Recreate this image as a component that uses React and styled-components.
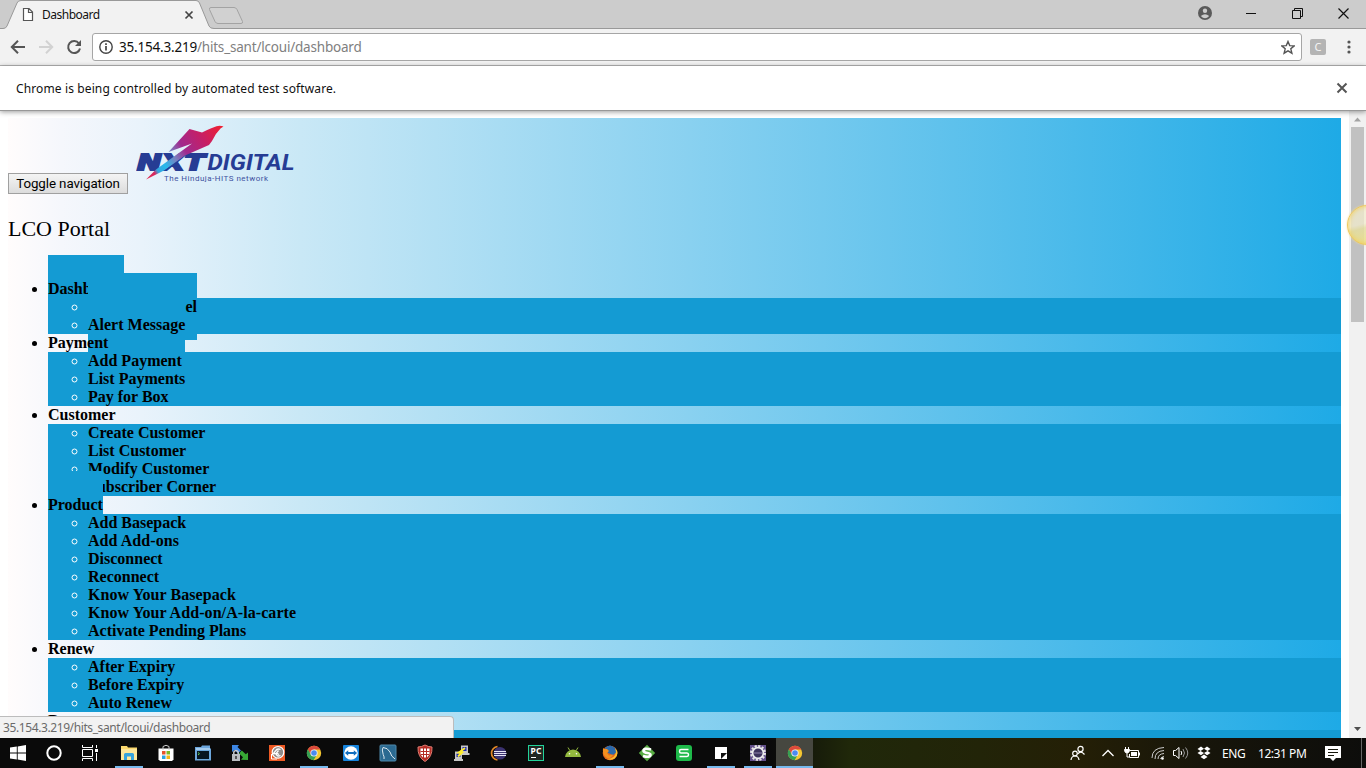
import React from "react";
import styled, { createGlobalStyle, css } from "styled-components";

const Global = createGlobalStyle`
  * { box-sizing: border-box; }
  html, body { margin: 0; padding: 0; overflow: hidden; background: #fff; }
`;

const ui = css`font-family: "Noto Sans", "Open Sans", sans-serif;`;

const Screen = styled.div`
  width: 1366px; height: 768px; display: flex; flex-direction: column; overflow: hidden; position: relative;
`;

/* ---------- browser chrome ---------- */
const TabStrip = styled.div`
  height: 29px; flex: none; background: #ccc; border-bottom: 1px solid #999;
  display: flex; align-items: flex-start; justify-content: space-between; position: relative;
`;
const Tabs = styled.div`display: flex; height: 29px;`;
const Tab = styled.div`
  width: 214px; height: 29px; position: relative; flex: none;
`;
const TabShape = styled.svg`position: absolute; left: 0; top: 0;`;
const TabContent = styled.div`
  position: relative; height: 29px; display: flex; align-items: center; padding-left: 22px;
`;
const TabTitle = styled.span`
  ${ui} font-size: 12px; letter-spacing: -0.5px; color: #111; width: 142px; margin-left: 8px; line-height: 29px;
`;
const NewTab = styled.svg`margin: 6px 0 0 -6px;`;
const WindowButtons = styled.div`display: flex; align-items: center; height: 26px;`;
const WindowButton = styled.div`width: 46px; height: 26px; display: grid; place-items: center;`;

const Toolbar = styled.div`
  height: 37px; flex: none; background: #f2f2f2; border-bottom: 1px solid #b6b6b6;
  display: flex; align-items: center; padding: 0 9px 0 10px;
`;
const NavIcon = styled.svg`margin-right: 12px; flex: none;`;
const AddressBar = styled.div`
  width: 1210px; height: 28px; margin-left: -2px; background: #fff; border: 1px solid #a6a6a6; border-radius: 3px;
  display: flex; align-items: center; padding: 0 6px 0 6px; ${ui} font-size: 13.5px;
`;
const Address = styled.span`flex: 1; margin-left: 6px; color: #808080; letter-spacing: -0.2px; white-space: nowrap;`;
const Host = styled.span`color: #111;`;
const Extension = styled.div`
  width: 16px; height: 16px; margin: 0 0 0 8px; background: #b4b4b4; border-radius: 2px; color: #f4f4f4;
  ${ui} font-size: 11px; line-height: 16px; text-align: center;
`;
const Dots = styled.svg`margin-left: 20px;`;

const InfoBar = styled.div`
  height: 45px; flex: none; background: #fff; border-bottom: 1px solid #989898; box-shadow: 0 1px 5px rgba(0,0,0,.4);
  display: flex; justify-content: space-between; align-items: center; padding: 0 18px 0 16px; position: relative; z-index: 5;
`;
const InfoText = styled.span`${ui} font-size: 12px; letter-spacing: 0.12px; color: #111;`;

/* ---------- page ---------- */
const Viewport = styled.div`height: 627px; flex: none; display: flex; overflow: hidden; position: relative; background: #fff;`;
const Page = styled.div`flex: 1; padding: 7px 8px 0; height: 627px; overflow: hidden;`;
const Body = styled.div`
  height: 900px; font-family: "Liberation Serif", "Times New Roman", serif; font-size: 16px; color: #000;
  background: linear-gradient(to right, #fffcfc 0%, #f5f7fc 4%, #e9f3fb 10%, #c9e8f6 22%, #1eaae6 100%);
`;
const Brand = styled.div`display: flex; align-items: flex-end; height: 76px;`;
const Toggle = styled.button`
  width: 120px; height: 21px; padding: 0; border: 1px solid #a0a0a0; border-radius: 0; color: #000;
  background: linear-gradient(#f4f4f4, #dcdcdc); font: 13.33px/17px Roboto, sans-serif; letter-spacing: -0.08px;
`;
const Logo = styled.svg`margin: 0 0 8px 8px;`;
const Heading = styled.div`font-size: 22px; line-height: 26px; padding-top: 22px; height: 86px;`;
const Menu = styled.ul`margin: 0; padding: 0 0 0 40px; list-style: disc; font-weight: bold; line-height: 18px;`;
const MenuItem = styled.li`height: auto;`;
const Label = styled.a`
  position: relative; color: #000; letter-spacing: ${(p) => (p.$long ? "0.07px" : "0")};
  ${(p) => p.$padded && css`padding: 25px 0; background: #149bd3;`}
`;
const SubMenu = styled.ul`
  position: relative; margin: 0; padding: 0 0 0 40px; list-style: circle; background: #149bd3; color: #fff;
`;
const ClippedLabel = styled(Label)`padding-left: 97.4px;`;

const ScrollBar = styled.div`
  width: 17px; height: 627px; background: #f1f1f1; display: flex; flex-direction: column; align-items: center;
`;
const Thumb = styled.div`width: 13px; height: 195px; background: #c1c1c1;`;
const ScrollSpace = styled.div`flex: 1;`;
const Bubble = styled.div`
  position: absolute; right: -21px; top: 94px; width: 40px; height: 40px; border-radius: 50%;
  border: 1px solid #f0c95c;
  background: linear-gradient(165deg, rgba(242,236,205,.75) 0 45%, rgba(229,222,160,.85) 55%, rgba(240,226,130,.9));
  box-shadow: inset 0 0 5px #f3cf55, 0 0 2px #f7dd8c;
`;
const Status = styled.div`
  position: absolute; left: 0; bottom: 30px; width: 454px; height: 22px; background: #f2f2f2; border: 1px solid #bcbcbc;
  border-left: 0; border-bottom: 0; border-radius: 0 4px 0 0; padding-left: 3px; ${ui} font-size: 12px; line-height: 22px;
  letter-spacing: -0.4px; color: #6a6a6a; z-index: 6;
`;

/* ---------- taskbar ---------- */
const TaskBar = styled.div`
  height: 30px; flex: none; display: flex; justify-content: space-between; color: #fff;
  background: linear-gradient(to right, #0a0a0a 0 770px, #171c0a 815px, #20280a 850px, #222408 980px, #241f06 1080px, #17150a 1200px, #0d0d0b);
`;
const Apps = styled.div`display: flex;`;
const SystemApps = styled.div`display: flex; margin-right: 2px;`;
const TaskButton = styled.div`
  width: ${(p) => (p.$system ? 36 : 37)}px; height: 30px; display: grid; place-items: center; position: relative;
  background: ${(p) => (p.$active ? "#464740" : "transparent")};
  &::after {
    content: ""; position: absolute; bottom: 0; height: 2px; background: #76b9ed;
    width: ${(p) => (p.$active ? "100%" : p.$open ? "28px" : 0)};
  }
`;
const Tray = styled.div`display: flex; align-items: center; width: 296px; ${ui} font-size: 12px;`;
const TrayIcon = styled.svg`flex: none; margin-right: ${(p) => p.$gap}px;`;
const TrayText = styled.span`
  letter-spacing: -0.45px; white-space: nowrap; width: ${(p) => p.$w}px; flex: none;
`;
const ShowDesktop = styled.div`width: 1px; height: 30px; margin-left: 20px; background: #666;`;

const Ic = ({ children }) => <svg width="18" height="18" viewBox="0 0 18 18">{children}</svg>;

const Chrome = () => (
  <Ic>
    <circle cx="9" cy="9" r="7.2" fill="#f4c631" />
    <path d="M2.8 5.4A7.2 7.2 0 0 1 15.4 5.6H9L5.8 10.4Z" fill="#dc4a3c" />
    <path d="M2.8 5.3A7.2 7.2 0 0 0 8.6 16.2L11.7 11 6 10.8Z" fill="#35a055" />
    <circle cx="9" cy="9" r="3.6" fill="#f4f4f4" /><circle cx="9" cy="9" r="2.8" fill="#4a8af0" />
  </Ic>
);

const systemIcons = [
  <Ic key="w"><path d="M1 3.5 7.8 2.5V8.5H1ZM8.7 2.4 17 1V8.5H8.7ZM1 9.4H7.8V15.5L1 14.5ZM8.7 9.4H17V17L8.7 15.6Z" fill="#fff" /></Ic>,
  <Ic key="c"><circle cx="9" cy="9" r="6.7" fill="none" stroke="#fff" strokeWidth="2" /></Ic>,
  <Ic key="t"><path d="M1.5 1V3.5H11.5V1M1.5 17V14.5H11.5V17M1.5 5.5H11.5V12.5H1.5ZM15.5 1V4M15.5 9V17" fill="none" stroke="#fff" /><path d="M14 5h3v3h-3z" fill="#fff" /></Ic>,
];

const apps = [
  { open: true, icon: <Ic><path d="M1 2H7L8 3.5H17V15H1Z" fill="#fbd96e" /><path d="M1 5H17V16H1Z" fill="#fde69a" /><path d="M4 16V10.5Q4 9 5.5 9H12.5Q14 9 14 10.5V16H11V12.5H7V16Z" fill="#36a3dc" /></Ic> },
  { icon: <Ic><path d="M1.5 4.5H16.5V15.5L15 17H3L1.5 15.5Z" fill="#fff" /><path d="M6 6V2.5Q9 0 12 2.5V6" fill="none" stroke="#ccc" /><path d="M5 7h3.5v3.5H5z" fill="#e8532b" /><path d="M9.5 7H13v3.5H9.5z" fill="#7db928" /><path d="M5 11.5h3.5V15H5z" fill="#2aa2e4" /><path d="M9.5 11.5H13V15H9.5z" fill="#f5b719" /></Ic> },
  { icon: <Ic><path d="M1 3H7L8 1.5H16V4L17 5V16.5H1Z" fill="#6ca6dc" /><path d="M2 4H16V6H2Z" fill="#a5cbed" /><rect x="3" y="7" width="12" height="8" fill="#081421" /><path d="M4 8.5 5.5 9.7 4 11" stroke="#5fcf55" fill="none" /></Ic> },
  { icon: <Ic><path d="M1 1H8L6.5 3 10 6.5 7 9.5 3.5 6 1 8Z" fill="#3c86e4" /><path d="M17 16V8.5L14.8 10.3 10.8 6.5 8 9.5 12 13.3 10 15.8Z" fill="#37a936" /><rect x="1" y="10" width="8" height="7" fill="#b9bdc2" /><path d="M2.8 10V8Q5 5 7.2 8V10" fill="none" stroke="#c6c9cd" strokeWidth="1.5" /><path d="M5 12V15" stroke="#333" strokeWidth="1.5" /></Ic> },
  { icon: <Ic><rect x="1" y="1" width="16" height="16" fill="#ee5a24" /><circle cx="10" cy="8.300" r="5.800" fill="#8f8b89" stroke="#fff" strokeWidth="1.200" /><path d="M12.500 5.500Q9 4 7.500 7L5.500 9.500 8 9.800Q9 13 12.500 11.500M10.500 6.500 8.500 9 11 10.500" fill="none" stroke="#fff" strokeWidth="1.300" /><path d="M3.500 10V15H9" fill="none" stroke="#fff" /></Ic> },
  { open: true, icon: <Chrome /> },
  { icon: <Ic><rect x="1" y="1" width="16" height="16" rx="1" fill="#1684dd" /><circle cx="9" cy="9" r="6.8" fill="#fff" /><path d="M2.9 9 6.2 6.3V8H11.8V6.3L15.1 9 11.8 11.700V10H6.2V11.700Z" fill="#126fc0" /></Ic> },
  { icon: <Ic><rect x="1" y="1" width="16" height="16" rx="1" fill="#2b6a91" stroke="#4e88aa" /><path d="M5 15Q5.500 13 4.200 10.500 2.500 5 4 3.500 8.500 3.500 11 8 12 12.500 16 15" fill="none" stroke="#dce8ef" /></Ic> },
  { icon: <Ic><path d="M9 1Q12.5 3 16 3 16.5 13 9 17.5 1.5 13 2 3 5.5 3 9 1Z" fill="#b52c25" stroke="#e07e74" /><path d="M4.500 4.5H13.500V10.5L11 13.500H7L4.500 10.5Z" fill="#fff" /><path d="M7.5 4V14M10.5 4V14M4.500 7.500H13.500M4.500 10.500H13.500" stroke="#b52c25" /></Ic> },
  { icon: <Ic><path d="M8 1.5H15V9H16.5V11H7.5V9H8ZM2 7.5H9V15H10V17H1V15H2Z" fill="#c5c5c5" /><path d="M9.5 3H13.5V7H9.5ZM3.5 9.5H7.5V13H3.5Z" fill="#1a27b4" /><path d="M12 4 6 8.5H9L5 12.5" fill="none" stroke="#ffee2c" strokeWidth="2" /></Ic> },
  { icon: <Ic><path d="M7.5 2.5A6.8 6.8 0 0 0 7.5 16" fill="none" stroke="#e48a28" strokeWidth="1.7" /><circle cx="10" cy="9.2" r="6.3" fill="#3b3270" /><path d="M4 7.5H16M4 9.5H16.5M4 11.5H16" stroke="#e5e4f2" /></Ic> },
  { icon: <Ic><rect x="1.5" y="1.5" width="15" height="15" fill="#202622" stroke="#22d29a" /><text x="3.500" y="10" fill="#fff" fontFamily="Noto Sans" fontWeight="700" fontSize="8.5" textLength="11">PC</text><path d="M4 13.5H9" stroke="#fff" /></Ic> },
  { icon: <Ic><path d="M1 13Q2 6 9 5.500 16 6 17 13Z" fill="#92b83e" /><path d="M4 3.5 5.8 6.5M14 3.5 12.2 6.5" stroke="#92b83e" /><circle cx="5.5" cy="9.8" r=".8" fill="#fff" /><circle cx="12.5" cy="9.8" r=".8" fill="#fff" /></Ic> },
  { open: true, icon: <Ic><circle cx="9" cy="9" r="7.3" fill="#e5681c" /><path d="M4 4Q9-1 14 4L16 8 12 11 7 9Z" fill="#2b69ab" /><path d="M2 4 3.5 5 6 5 8 7 6 9 8 11.5 12 10.5Q10 15 6 14 1 11 2 4Z" fill="#f39120" /><path d="M14 4Q19 9 14 14 11 17 6 15 14 15 15 8Z" fill="#f8bd2f" /></Ic> },
  { icon: <Ic><path d="M9 .8 17.200 9 9 17.200 .8 9Z" fill="#58ad43" /><path d="M13 5.500Q5.500 3.500 5.500 7 6 8.500 9.500 9 12.500 9.5 12.500 11 11.500 14 5 12" fill="none" stroke="#fff" strokeWidth="2.6" /></Ic> },
  { icon: <Ic><rect x="1" y="1" width="16" height="16" rx="3" fill="#1eba4a" /><path d="M13.5 5.5H6Q4.5 5.5 4.5 7.2 4.5 9 6 9H12Q13.5 9 13.5 10.8 13.5 12.5 12 12.5H4.5" fill="none" stroke="#fff" strokeWidth="1.5" /></Ic> },
  { open: true, icon: <Ic><path d="M3 3H15V15H3Z" fill="#fff" /><path d="M9 9H15L9 15Z" fill="#111" /></Ic> },
  { open: true, icon: <Ic><rect x="1" y="1" width="16" height="16" fill="#63508b" /><circle cx="9" cy="9" r="7" fill="none" stroke="#e6e6e2" strokeWidth="2" strokeDasharray="2.200 1.465" /><circle cx="9" cy="9" r="5.4" fill="#3c335b" stroke="#eee" strokeWidth="1.7" /><path d="M5 9H13" stroke="#756b91" strokeWidth="1.500" /></Ic> },
  { active: true, icon: <Chrome /> },
];

const menu = [
  { name: "Dashboard", padded: true, items: [{ clipped: "el" }, { name: "Alert Message", padded: true }] },
  { name: "Payment", items: [{ name: "Add Payment" }, { name: "List Payments" }, { name: "Pay for Box" }] },
  { name: "Customer", items: [{ name: "Create Customer" }, { name: "List Customer" }, { name: "Modify Customer" }, { name: "Subscriber Corner" }] },
  { name: "Product", padded: true, items: [{ name: "Add Basepack" }, { name: "Add Add-ons", long: true }, { name: "Disconnect" }, { name: "Reconnect" }, { name: "Know Your Basepack", long: true }, { name: "Know Your Add-on/A-la-carte", long: true }, { name: "Activate Pending Plans" }] },
  { name: "Renew", items: [{ name: "After Expiry" }, { name: "Before Expiry" }, { name: "Auto Renew" }] },
  { name: "Report", items: [{ name: "" }] },
];

const BrandLogo = () => (
  <Logo width="162" height="62" viewBox="135 123 162 62">
    <defs>
      <linearGradient id="bird" gradientUnits="userSpaceOnUse" x1="144" y1="180" x2="222" y2="126">
        <stop offset="0" stopColor="#e52b4e" /><stop offset=".13" stopColor="#d6285f" /><stop offset=".17" stopColor="#35a6df" />
        <stop offset=".27" stopColor="#29b9eb" /><stop offset=".4" stopColor="#7a80c0" /><stop offset=".53" stopColor="#a02a8e" /><stop offset=".75" stopColor="#c51f67" /><stop offset="1" stopColor="#f0202f" />
      </linearGradient>
    </defs>
    <g fill="#263c94" fontWeight="700" fontStyle="italic">
      <text x="136" y="168.500" fontSize="21" fontFamily="'DejaVu Sans', sans-serif" textLength="68" lengthAdjust="spacingAndGlyphs" stroke="#263c94" strokeWidth="1.8">NXT</text>
      <text x="206.500" y="169" fontSize="22.500" fontFamily="Roboto, sans-serif" textLength="87" lengthAdjust="spacingAndGlyphs">DIGITAL</text>
    </g>
    <path d="M167.500 151 188.5 128 201 131.500Q211 126.500 215.500 125.200 219 124.200 222.500 125.500L219.500 127.5Q214 133 211 140L208 144 184 154.500 163 169.500 145 178.500 155 168.500 191 142.5Z" fill="url(#bird)" />
    <text x="163" y="180" fontSize="8" fontFamily="Roboto, sans-serif" fill="#3d51a0" textLength="104">The Hinduja-HITS network</text>
  </Logo>
);

export default function App() {
  return (
    <Screen>
      <Global />
      <TabStrip>
        <Tabs>
          <Tab>
            <TabShape width="214" height="29"><path d="M0 29V28.5H3Q6 28.5 7 26L17 3Q18 .5 21 .5H196Q198.5 .5 199.5 3L209 26Q210 28.5 214 28.5V29Z" fill="#f2f2f2" /><path d="M0 28.5H3Q6 28.5 7 26L17 3Q18 .5 21 .5H196Q198.5 .5 199.5 3L209 26Q210 28.5 214 28.5" fill="none" stroke="#999" /></TabShape>
            <TabContent>
              <svg width="12" height="15" viewBox="0 0 12 15"><path d="M1.5 1.5H7L10.5 5V13.5H1.5ZM6.5 1.5V5.5H10.5" fill="#fff" stroke="#555" strokeWidth="1.2" /></svg>
              <TabTitle>Dashboard</TabTitle>
              <svg width="10" height="10"><path d="M1.5 1.5 8.5 8.5M8.5 1.5 1.5 8.5" stroke="#444" strokeWidth="1.7" /></svg>
            </TabContent>
          </Tab>
          <NewTab width="36" height="19"><path d="M3 1.5H26Q28 1.5 29 3.5L34.5 15.5Q35 17.5 33 17.5H10Q8 17.5 7 15.5L1.5 3.5Q1 1.5 3 1.5Z" fill="#d1d1d1" stroke="#a3a3a3" /></NewTab>
        </Tabs>
        <WindowButtons>
          <WindowButton><svg width="14" height="14"><circle cx="7" cy="7" r="7" fill="#5a5a5a" /><circle cx="7" cy="4.8" r="2.2" fill="#ccc" /><path d="M2.8 10Q7 6.5 11.2 10 7 14.5 2.8 10Z" fill="#ccc" /></svg></WindowButton>
          <WindowButton><svg width="10" height="10"><path d="M0 5.5H10" stroke="#111" /></svg></WindowButton>
          <WindowButton><svg width="11" height="11"><path d="M.5 2.5H8.5V10.5H.5ZM2.5 2.5V.5H10.5V8.5H8.5" fill="none" stroke="#111" /></svg></WindowButton>
          <WindowButton><svg width="11" height="11"><path d="M.5 .5 10.5 10.5M10.5 .5 .5 10.5" stroke="#111" strokeWidth="1.2" /></svg></WindowButton>
        </WindowButtons>
      </TabStrip>
      <Toolbar>
        <NavIcon width="16" height="16"><path d="M15 8H2M8 1.8 1.8 8 8 14.2" fill="none" stroke="#555" strokeWidth="2" /></NavIcon>
        <NavIcon width="16" height="16"><path d="M1 8H14M8 1.8 14.2 8 8 14.2" fill="none" stroke="#d2d2d2" strokeWidth="2" /></NavIcon>
        <NavIcon width="16" height="16"><path d="M13 4.5A6 6 0 1 0 14 9.5" fill="none" stroke="#555" strokeWidth="2" /><path d="M15 1V7H9Z" fill="#555" /></NavIcon>
        <AddressBar>
          <svg width="14" height="14"><circle cx="7" cy="7" r="6.2" fill="none" stroke="#444" strokeWidth="1.4" /><path d="M7 6V10.5M7 3.3V5" stroke="#444" strokeWidth="1.7" /></svg>
          <Address><Host>35.154.3.219</Host>/hits_sant/lcoui/dashboard</Address>
          <svg width="14" height="15"><path d="M7 1.5 8.700 5.6 13.2 5.9 9.8 8.8 10.9 13.2 7 10.8 3.1 13.2 4.2 8.8 .8 5.9 5.3 5.6Z" fill="none" stroke="#555" strokeWidth="1.4" /></svg>
        </AddressBar>
        <Extension>C</Extension>
        <Dots width="6" height="16"><g fill="#555"><circle cx="3" cy="3" r="1.6" /><circle cx="3" cy="8" r="1.6" /><circle cx="3" cy="13" r="1.6" /></g></Dots>
      </Toolbar>
      <InfoBar>
        <InfoText>Chrome is being controlled by automated test software.</InfoText>
        <svg width="12" height="12"><path d="M1.5 1.5 10.5 10.5M10.5 1.5 1.5 10.5" stroke="#555" strokeWidth="2" /></svg>
      </InfoBar>
      <Viewport>
        <Page>
          <Body>
            <Brand><Toggle>Toggle navigation</Toggle><BrandLogo /></Brand>
            <Heading>LCO Portal</Heading>
            <Menu>
              {menu.map((m) => (
                <MenuItem key={m.name}>
                  <Label $padded={m.padded}>{m.name}</Label>
                  <SubMenu>
                    {m.items.map((it, i) => (
                      <MenuItem key={i}>
                        {it.clipped ? <ClippedLabel $padded>{it.clipped}</ClippedLabel> : <Label $padded={it.padded} $long={it.long}>{it.name}</Label>}
                      </MenuItem>
                    ))}
                  </SubMenu>
                </MenuItem>
              ))}
            </Menu>
          </Body>
        </Page>
        <ScrollBar>
          <svg width="17" height="16"><path d="M5 10.5 8.5 6.5 12 10.5Z" fill="#a3a3a3" /></svg>
          <Thumb />
          <ScrollSpace />
          <svg width="17" height="17"><path d="M5 6 8.5 10 12 6Z" fill="#505050" /></svg>
        </ScrollBar>
        <Bubble />
      </Viewport>
      <Status>35.154.3.219/hits_sant/lcoui/dashboard</Status>
      <TaskBar>
        <Apps>
          <SystemApps>{systemIcons.map((ic, i) => <TaskButton key={i} $system>{ic}</TaskButton>)}</SystemApps>
          {apps.map((a, i) => <TaskButton key={i} $open={a.open} $active={a.active}>{a.icon}</TaskButton>)}
        </Apps>
        <Tray>
          <TrayIcon $gap={15} width="16" height="16"><g fill="none" stroke="#fff" strokeWidth="1.2"><circle cx="10.5" cy="4" r="2.6" /><path d="M7.8 9Q10.5 5 14.5 9.5" /><circle cx="5" cy="8.5" r="2.3" /><path d="M1 15Q1.5 11 5 11 8.5 11 9 15" /></g></TrayIcon>
          <TrayIcon $gap={9} width="14" height="14"><path d="M1.5 10 7 4.5 12.5 10" fill="none" stroke="#fff" strokeWidth="1.3" /></TrayIcon>
          <TrayIcon $gap={10} width="17" height="14"><g fill="none" stroke="#fff"><path d="M5.5 4.5H14.5V11.5H5.5V8M15.5 6.5V9.5M1.5 1V3M4.5 1V3M3 7V11H5" /><path d="M.5 3.5H5.5Q5.5 7 3 7 .5 7 .5 3.5Z" fill="#fff" /></g><path d="M7 6H13V10H7Z" fill="#fff" /></TrayIcon>
          <TrayIcon $gap={7} width="14" height="14"><g fill="none" stroke="#ccc"><path d="M1 12Q1 2 13 1.5M4 13Q4 5 13 4.5M7 13Q7 8 13 7.5M9.5 13Q10 11 13 10.5" /></g><circle cx="11.5" cy="12.5" r="1.3" fill="#fff" /></TrayIcon>
          <TrayIcon $gap={8} width="17" height="14"><g fill="none" stroke="#fff"><path d="M1.5 4.5H3.5L7 1.5V12.5L3.5 9.5H1.5Z" /><path d="M9 5Q10.5 7 9 9" /><path d="M11 3Q14 7 11 11M13.5 1.5Q18 7 13.5 12.5" stroke="#999" /></g></TrayIcon>
          <TrayIcon $gap={11} width="14" height="14"><path d="M4 .5 7 2.7 10 .5 13.5 3 10.5 5 13.5 7 10 9.3 7 7 4 9.3 .5 7 3.5 5 .5 3ZM7 2.7 3.5 5 7 7 10.5 5ZM7 8.5 10.5 11 7 13.3 3.5 11Z" fill="#fff" fillRule="evenodd" /></TrayIcon>
          <TrayText $w={36}>ENG</TrayText>
          <TrayText $w={67}>12:31 PM</TrayText>
          <TrayIcon $gap={0} width="16" height="17"><path d="M0 1H16V13H11L8 16 5 13H0Z" fill="#fff" /><path d="M3 4.5H13M3 7.5H13M3 10.5H9" stroke="#17170b" /></TrayIcon>
          <ShowDesktop />
        </Tray>
      </TaskBar>
    </Screen>
  );
}
